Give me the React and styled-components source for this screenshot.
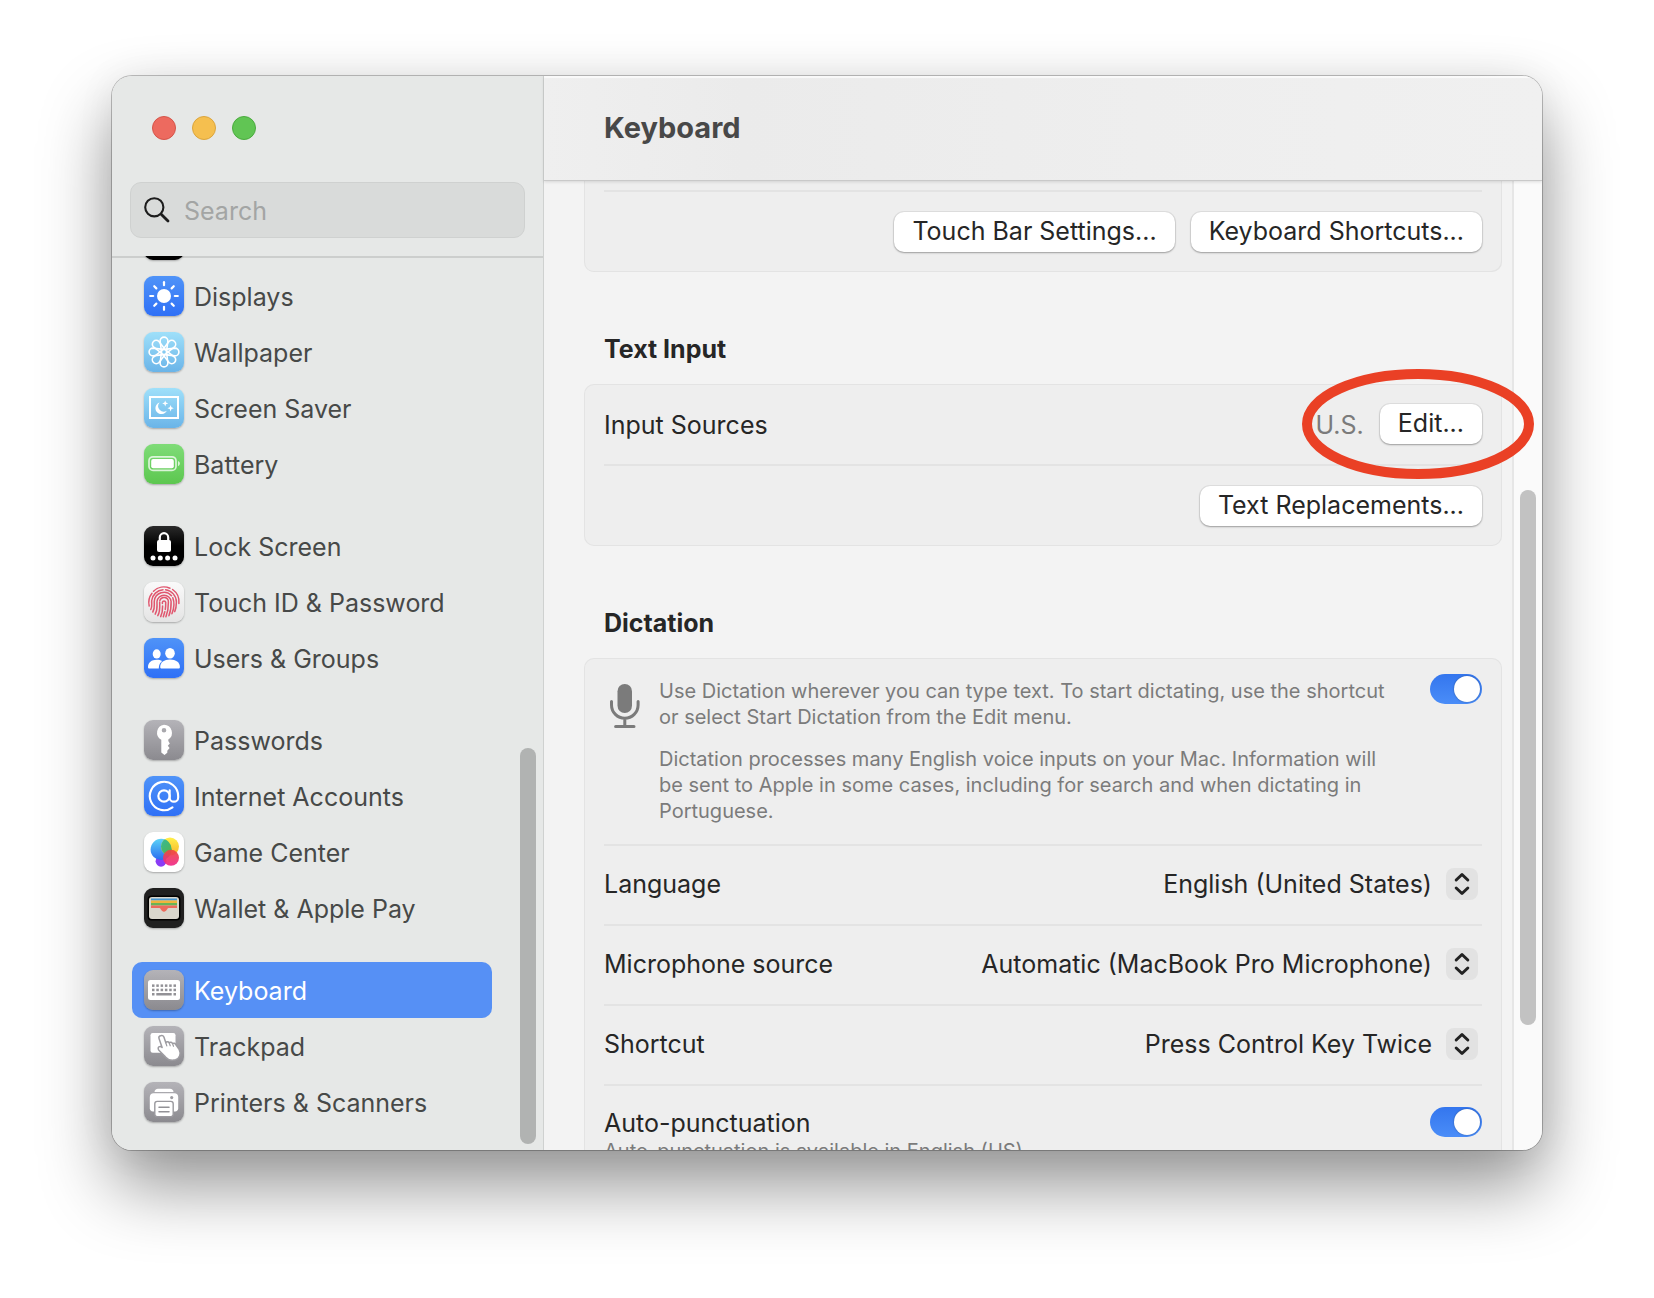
import React from "react";
import styled, { createGlobalStyle, css } from "styled-components";
import { AtSign } from "lucide-react";

const GlobalStyle = createGlobalStyle`
  *, *::before, *::after { box-sizing: border-box; }
  body {
    margin: 0;
    background: #ffffff;
    font-family: Inter, "Liberation Sans", sans-serif;
    font-size: 25px;
    line-height: 32px;
    color: #262626;
  }
  button, input, select { font: inherit; color: inherit; margin: 0; }
  h1, h2, p, ul { margin: 0; padding: 0; }
`;

/* ---------- window frame ---------- */

const Desktop = styled.div`
  display: flex;
  height: 100vh;
  padding: 76px 112px 148px;
  overflow: hidden;
`;

const Window = styled.main`
  flex: 1;
  display: grid;
  grid-template-columns: 432px minmax(0, 1fr);
  min-height: 0;
  border-radius: 20px;
  overflow: hidden;
  background: #f3f3f3;
  box-shadow: 0 0 0 1px rgba(0, 0, 0, 0.24), 0 36px 70px rgba(0, 0, 0, 0.42), 0 0 40px rgba(0, 0, 0, 0.06);
`;

/* ---------- sidebar ---------- */

const Sidebar = styled.aside`
  display: flex;
  flex-direction: column;
  min-height: 0;
  background: #e6e8e7;
  border-right: 1px solid #cfd1d0;
`;

const TrafficLights = styled.div`
  display: flex;
  gap: 16px;
  padding: 40px 40px 42px;
`;

const Light = styled.button`
  width: 24px;
  height: 24px;
  padding: 0;
  border-radius: 50%;
  border: 1px solid ${(p) => p.$edge};
  background: ${(p) => p.$fill};
`;

const SearchField = styled.label`
  display: flex;
  align-items: center;
  gap: 14px;
  height: 56px;
  margin: 0 18px;
  padding: 0 13px;
  border: 1px solid #cfd1d0;
  border-radius: 11px;
  background: #d9dbda;
`;

const SearchInput = styled.input`
  flex: 1;
  min-width: 0;
  padding: 2px 0 0;
  border: 0;
  outline: 0;
  background: transparent;
  &::placeholder { color: #a3a5a4; opacity: 1; }
`;

const ListArea = styled.nav`
  flex: 1;
  min-height: 0;
  display: grid;
  grid-template-columns: minmax(0, 1fr) 16px;
  grid-template-rows: minmax(0, 1fr);
  column-gap: 28px;
  margin-top: 18px;
  padding: 0 7px 0 20px;
  background: linear-gradient(#cccecd, #cccecd) top / 100% 2px no-repeat;
  overflow: hidden;
`;

const Groups = styled.div`
  display: flex;
  flex-direction: column;
  justify-content: flex-end;
  gap: 26px;
  min-height: 0;
  padding-bottom: 20px;
  overflow: hidden;
`;

const Group = styled.ul`
  flex: none;
  list-style: none;
`;

const NavLink = styled.a`
  display: flex;
  align-items: center;
  gap: 10px;
  height: 56px;
  padding: 0 12px;
  border-radius: 10px;
  color: #474948;
  text-decoration: none;
  white-space: nowrap;
  ${(p) =>
    p.$active &&
    css`
      background: #5690f5;
      color: #ffffff;
    `}
`;

const Caption = styled.span`
  padding-top: 2px;
`;

const Tile = styled.span`
  flex: none;
  display: flex;
  align-items: center;
  justify-content: center;
  width: 40px;
  height: 40px;
  border-radius: 9px;
  background: ${(p) => p.$bg};
  color: #ffffff;
  box-shadow: 0 1px 2px rgba(0, 0, 0, 0.28);
`;

const ThumbTrack = styled.div`
  display: grid;
  grid-template-rows: ${(p) => p.$rows};
`;

const Thumb = styled.span`
  grid-row: 2;
  width: 16px;
  border-radius: 8px;
  background: ${(p) => p.$color};
`;

/* ---------- content ---------- */

const Content = styled.section`
  display: flex;
  flex-direction: column;
  min-width: 0;
  min-height: 0;
`;

const Header = styled.header`
  position: relative;
  z-index: 1;
  flex: none;
  display: flex;
  align-items: center;
  height: 105px;
  padding: 0 60px;
  border-bottom: 1px solid #c9c9c9;
  background: linear-gradient(90deg, #efefef, #ebebeb 20%, #eeeeee 60%, #f0f0f0);
  box-shadow: 0 1px 3px rgba(0, 0, 0, 0.12), inset 0 2px 1px rgba(255, 255, 255, 0.7);
`;

const Title = styled.h1`
  font-size: 29px;
  line-height: 36px;
  font-weight: 700;
  color: #484848;
`;

const Scroller = styled.div`
  flex: 1;
  min-height: 0;
  display: grid;
  grid-template-columns: minmax(0, 1fr) 30px;
  grid-template-rows: minmax(0, 1fr);
  overflow: hidden;
`;

const Pane = styled.div`
  padding: 0 10px 0 40px;
`;

const Track = styled(ThumbTrack)`
  padding-left: 6px;
  border-left: 2px solid #e6e6e6;
  background: #fafafa;
`;

const SectionTitle = styled.h2`
  padding: 60px 20px 18px;
  font-size: 25px;
  line-height: 34px;
  font-weight: 700;
`;

const Card = styled.div`
  padding: 0 20px;
  border-radius: 10px;
  background: #eeeeee;
  box-shadow: inset 0 0 0 1px #e3e3e3;
  ${(p) =>
    p.$continued &&
    css`
      padding-top: 9px;
      border-radius: 0 0 10px 10px;
      box-shadow: inset 1px 0 #e3e3e3, inset -1px -1px #e3e3e3;
    `}
`;

const Row = styled.div`
  display: flex;
  align-items: center;
  justify-content: ${(p) => (p.$end ? "flex-end" : "space-between")};
  gap: 16px;
  min-height: ${(p) => (p.$tall ? 80 : 78)}px;
  padding-bottom: ${(p) => (p.$tall ? 0 : 2)}px;
`;

const Divider = styled.hr`
  height: 2px;
  margin: 0;
  border: 0;
  background: #e3e3e3;
`;

const PushButton = styled.button`
  height: 40px;
  padding: 0 18px 2px;
  border: 0;
  border-radius: 10px;
  background: #ffffff;
  box-shadow: 0 0 0 1px rgba(0, 0, 0, 0.06), 0 1px 2px rgba(0, 0, 0, 0.3);
  white-space: nowrap;
`;

const Value = styled.div`
  position: relative;
  display: flex;
  align-items: center;
  gap: 16px;
  color: #7b7b7b;
  ${PushButton} { color: #262626; }
`;

const Marker = styled.svg`
  position: absolute;
  top: 50%;
  right: -52px;
  z-index: 2;
  transform: translateY(-50%);
  pointer-events: none;
`;

const DictationRow = styled.div`
  display: flex;
  align-items: flex-start;
  padding: 16px 0 20px;
`;

const MicIcon = styled.svg`
  flex: none;
  margin: 10px 11px 0 0;
`;

const Notes = styled.div`
  flex: 1;
  display: grid;
  gap: 16px;
  padding: 4px 32px 0 0;
  font-size: 20px;
  line-height: 26px;
  color: #7b7b7b;
`;

const Toggle = styled.input`
  appearance: none;
  flex: none;
  display: flex;
  justify-content: flex-end;
  width: 52px;
  height: 30px;
  padding: 2px;
  border-radius: 15px;
  background: linear-gradient(#3476ee, #4a8df8);
  &::before {
    content: "";
    width: 26px;
    height: 26px;
    border-radius: 50%;
    background: #ffffff;
    box-shadow: 0 0 2px rgba(0, 0, 0, 0.35);
  }
  &:not(:checked) {
    justify-content: flex-start;
    background: #d5d5d5;
  }
`;

const PopUp = styled.div`
  display: flex;
  align-items: center;
  gap: 14px;
  padding-right: 4px;
`;

const PopUpSelect = styled.select`
  appearance: none;
  padding: 0;
  border: 0;
  outline: 0;
  background: transparent;
  text-align-last: right;
`;

const Stepper = styled.span`
  display: flex;
  align-items: center;
  justify-content: center;
  width: 32px;
  height: 32px;
  border-radius: 8px;
  background: #e2e2e2;
`;

const AutoRow = styled.div`
  display: flex;
  align-items: flex-start;
  justify-content: space-between;
  padding: 21px 0;
`;

const Hint = styled.p`
  font-size: 20px;
  line-height: 24px;
  color: #7b7b7b;
`;

/* ---------- icons ---------- */

const BLUE = "linear-gradient(#4f93f8, #2f70f6)";
const SKY = "linear-gradient(#9fe0fa, #6ab4e8)";
const GREY = "linear-gradient(#b4b3b8, #8b8a8f)";
const BLACK = "linear-gradient(#2a2a2a, #000000 50%)";

const Glyph = ({ children, ...rest }) => (
  <svg width="40" height="40" viewBox="0 0 40 40" fill="none" aria-hidden="true" {...rest}>
    {children}
  </svg>
);

const turns = [0, 45, 90, 135, 180, 225, 270, 315];

const SunGlyph = () => (
  <Glyph>
    <circle cx="20" cy="20" r="7" fill="#fff" />
    {turns.map((a) => (
      <path key={a} d="M20 9.2V6.2" stroke="#fff" strokeWidth="2.2" strokeLinecap="round" transform={`rotate(${a} 20 20)`} />
    ))}
  </Glyph>
);

const FlowerGlyph = () => (
  <Glyph>
    <g stroke="#fff" strokeWidth="1.6" strokeLinejoin="round">
      {turns.map((a) => (
        <path key={a} d="M17.400 19 16.100 9A3.900 3.900 0 1 1 23.900 9L22.600 19" transform={`rotate(${a} 20 20)`} />
      ))}
      <circle cx="20" cy="20" r="2.600" />
    </g>
  </Glyph>
);

const ScreenSaverGlyph = () => (
  <Glyph>
    <rect x="6" y="9" width="28" height="21" stroke="#fff" strokeWidth="2" />
    <path d="M15.6 14.4a6 6 0 1 0 7.2 8.4 5.6 5.6 0 0 1-7.2-8.4Z" fill="#fff" />
    <path d="m21.2 12.4.8 2.2 2.2.8-2.2.8-.8 2.2-.8-2.2-2.2-.8 2.2-.8ZM26.6 17l.9 2.3 2.3.9-2.3.9-.9 2.3-.9-2.3-2.3-.9 2.3-.9Z" fill="#fff" />
  </Glyph>
);

const BatteryGlyph = () => (
  <Glyph>
    <rect x="5" y="12.8" width="27" height="13.6" rx="4" stroke="#fff" strokeOpacity=".75" strokeWidth="1.7" />
    <rect x="7.2" y="15" width="22.6" height="9.2" rx="2" fill="#fff" />
    <path d="M34 17v5.2c1.1-.4 1.9-1.4 1.9-2.6S35.100 17.400 34 17Z" fill="#fff" fillOpacity=".75" />
  </Glyph>
);

const LockGlyph = () => (
  <Glyph>
    <path d="M15.800 15v-3.600a4.200 4.200 0 0 1 8.400 0V15" stroke="#fff" strokeWidth="2.200" />
    <rect x="13" y="14" width="14" height="12" rx="2" fill="#fff" />
    {[9, 16.3, 23.600, 31].map((x) => (
      <circle key={x} cx={x} cy="32" r="2.500" fill="#fff" />
    ))}
  </Glyph>
);

const FingerprintGlyph = () => (
  <Glyph>
    <g stroke="#e0566e" strokeWidth="1.500" strokeLinecap="round">
      <path d="M9.500 9.200A15 15 0 0 1 26 6.300" />
      <path d="M28.600 7.500A15 15 0 0 1 34.900 21.500" />
      <path d="M5.200 24A15 15 0 0 1 8 11.300" />
      <path d="M6.800 27.500C8.500 24.500 7.400 22 7.700 18.500A12.400 12.400 0 0 1 19 7.700" />
      <path d="M21.600 7.800A12.400 12.400 0 0 1 32.400 20c0 4-.6 7.200-1.700 9.600" />
      <path d="M8.800 30c2.400-4 1.300-7.200 1.500-10.800A9.800 9.800 0 0 1 27.500 13.800" />
      <path d="M28.800 15.800c1.800 4.800 1.100 11.200-.9 16" />
      <path d="M11.200 32.100c2.800-4.600 1.600-8.600 1.800-12.600a7.100 7.100 0 0 1 14.100 0c.2 5-.4 9.800-2.200 14.200" />
      <path d="M13.800 33.700c2.700-4.700 1.800-9.700 1.900-13.700" />
      <path d="M15.800 18.600a4.400 4.400 0 0 1 8.600 1.400c.1 5.100-.6 10-2.500 14.800" />
      <path d="M16.700 34.600c1.700-3.700 2-6.600 1.900-10.600" />
      <path d="M18.400 21.500v-1.300a1.700 1.700 0 0 1 3.300 0c.1 2.600 0 4.800-.4 7.200M20.800 29.800l-1.500 5" />
    </g>
  </Glyph>
);

const UsersGlyph = () => (
  <Glyph>
    <g fill="#fff">
      <ellipse cx="12.700" cy="15.900" rx="4" ry="4.600" />
      <path d="M4 29c0-4.500 3.600-7.300 8.700-7.300 2.200 0 4 .5 5.400 1.400-2 1.700-3.300 4-3.300 7.400H5.400C4.500 30.500 4 30 4 29Z" />
      <ellipse cx="26" cy="15.200" rx="4.800" ry="5.300" />
      <path d="M16.200 29c0-4.600 3.900-7.500 9.800-7.500s9.900 2.900 9.900 7.500c0 1-.6 1.500-1.500 1.500H17.700c-.9 0-1.500-.5-1.500-1.500Z" />
    </g>
  </Glyph>
);

const KeyGlyph = () => (
  <Glyph>
    <path
      fill="#fff"
      fillRule="evenodd"
      d="M20 4.800a8 8 0 0 1 4.300 14.700V21l1.500 2.400-2 2.300 1.800 2.400-2.300 2.600v2L20.500 35l-3.200-2.500V19.800A8 8 0 0 1 20 4.800Zm0 3.100a2.300 2.300 0 1 0 0 4.600 2.300 2.300 0 0 0 0-4.600Z"
    />
  </Glyph>
);

const GameGlyph = () => (
  <Glyph>
    <defs>
      <linearGradient id="gcBlue" x1="0" y1="0" x2="0" y2="1"><stop stopColor="#5cd3f7" /><stop offset="1" stopColor="#2a6df0" /></linearGradient>
      <linearGradient id="gcYellow" x1="0" y1="0" x2="0" y2="1"><stop stopColor="#fff04a" /><stop offset="1" stopColor="#f7b32b" /></linearGradient>
      <linearGradient id="gcGreen" x1="0" y1="0" x2="1" y2="1"><stop stopColor="#35b8a0" /><stop offset="1" stopColor="#5bb52e" /></linearGradient>
      <linearGradient id="gcRed" x1="0" y1="0" x2="0" y2="1"><stop stopColor="#ee4a3c" /><stop offset="1" stopColor="#f0288a" /></linearGradient>
      <clipPath id="gcClip"><circle cx="17.200" cy="17.400" r="10.600" /></clipPath>
    </defs>
    <circle cx="17" cy="29.300" r="5.400" fill="#8a3cf5" />
    <circle cx="17.200" cy="17.400" r="10.600" fill="url(#gcBlue)" />
    <circle cx="26" cy="14.600" r="9" fill="url(#gcYellow)" />
    <circle cx="26" cy="14.600" r="9" fill="url(#gcGreen)" clipPath="url(#gcClip)" />
    <circle cx="27" cy="25.800" r="8" fill="url(#gcRed)" fillOpacity=".92" />
  </Glyph>
);

const WalletGlyph = () => (
  <Glyph>
    <rect x="3.500" y="7.500" width="33" height="25" rx="4" fill="#000" />
    <rect x="5" y="9" width="30" height="22" rx="3" fill="#d9d6cc" />
    <path d="M7 10.500h26v2H7Z" fill="#4596d1" />
    <path d="M7 12.500h26V15H7Z" fill="#f0b43c" />
    <path d="M7 15h26v2.500H7Z" fill="#68b456" />
    <path d="M7 17.500h26v2.600h-8.500c-1.400 0-1.600 3.600-4.500 3.600s-3.100-3.600-4.500-3.600H7Z" fill="#ec6a5c" />
  </Glyph>
);

const KeyboardGlyph = () => (
  <Glyph>
    <rect x="4" y="10" width="32" height="20" rx="2.500" fill="#fff" />
    <g fill="#929196">
      {[8, 12.300, 16.600, 20.900, 25.200, 29.500].map((x) => (
        <React.Fragment key={x}>
          <rect x={x} y="14.400" width="2.500" height="2.500" />
          <rect x={x} y="18.700" width="2.500" height="2.500" />
        </React.Fragment>
      ))}
      <rect x="8" y="23" width="2.500" height="2.500" />
      <rect x="12.300" y="23" width="15.400" height="2.500" />
      <rect x="29.500" y="23" width="2.500" height="2.500" />
    </g>
  </Glyph>
);

const TrackpadGlyph = () => (
  <Glyph>
    <rect x="6.500" y="7" width="25" height="19.800" rx="2.200" fill="#fff" />
    <path
      d="M16.300 9.800c1.600-.9 3.200 0 3.700 1.500l1.800 5.400c.8-1.200 2.700-1.200 3.400.1 1-.9 2.700-.6 3.300.7 1.200-.8 2.800-.2 3.400 1.200l3.200 4.600c2.200 4.600.6 9.200-3.600 10.500-4.200 1.100-7.500.1-10.100-2.900l-6.500-6.600c-1-1.300-.9-2.800 0-3.400 1-.6 2.300-.3 3.200.6l-3-8.700c-.5-1.200-.2-2.400 1.200-3Z"
      fill="#fff"
      stroke="#9d9ca1"
      strokeWidth="1.500"
      strokeLinejoin="round"
    />
    <path d="M21.800 16.700l1 3.200M25.200 16.800l1 3M28.500 17.500l1 2.800" stroke="#9d9ca1" strokeWidth="1.200" strokeLinecap="round" />
  </Glyph>
);

const PrinterGlyph = () => (
  <Glyph>
    <path d="M10.500 10c0-2 1.500-3.300 3.500-3.300h12c2 0 3.500 1.300 3.500 3.300Z" fill="#fff" />
    <path d="M9.500 11.200h21c2.200 0 3.700 1.500 3.700 3.700v11.400c0 2-1.200 3.200-3.200 3.200H9c-2 0-3.200-1.200-3.200-3.200V14.900c0-2.200 1.500-3.700 3.700-3.700Z" fill="#fff" />
    <circle cx="27.700" cy="15.600" r="1.600" fill="#9d9ca1" />
    <rect x="10.800" y="19.400" width="18.400" height="15.200" rx="2.400" fill="#fff" stroke="#9a999e" strokeWidth="1.400" />
    <path d="M15 25.200h10M15 29.800h10" stroke="#929196" strokeWidth="1.500" strokeLinecap="round" />
  </Glyph>
);

const groups = [
  [
    { icon: null, bg: "#000000" },
    { label: "Displays", icon: <SunGlyph />, bg: BLUE },
    { label: "Wallpaper", icon: <FlowerGlyph />, bg: SKY },
    { label: "Screen Saver", icon: <ScreenSaverGlyph />, bg: SKY },
    { label: "Battery", icon: <BatteryGlyph />, bg: "linear-gradient(#7fdc78, #5cc74f)" },
  ],
  [
    { label: "Lock Screen", icon: <LockGlyph />, bg: BLACK },
    { label: "Touch ID & Password", icon: <FingerprintGlyph />, bg: "linear-gradient(#fafafa, #e4e4e4)" },
    { label: "Users & Groups", icon: <UsersGlyph />, bg: BLUE },
  ],
  [
    { label: "Passwords", icon: <KeyGlyph />, bg: GREY },
    { label: "Internet Accounts", icon: <AtSign size={34} strokeWidth={1.5} aria-hidden="true" />, bg: BLUE },
    { label: "Game Center", icon: <GameGlyph />, bg: "#ffffff" },
    { label: "Wallet & Apple Pay", icon: <WalletGlyph />, bg: "#202020" },
  ],
  [
    { label: "Keyboard", icon: <KeyboardGlyph />, bg: GREY, active: true },
    { label: "Trackpad", icon: <TrackpadGlyph />, bg: GREY },
    { label: "Printers & Scanners", icon: <PrinterGlyph />, bg: GREY },
  ],
];

const popUps = [
  { id: "language", label: "Language", value: "English (United States)" },
  { id: "microphone", label: "Microphone source", value: "Automatic (MacBook Pro Microphone)" },
  { id: "shortcut", label: "Shortcut", value: "Press Control Key Twice" },
];

function PopUpRow({ id, label, value }) {
  return (
    <Row>
      <label htmlFor={id}>{label}</label>
      <PopUp>
        <PopUpSelect id={id} defaultValue={value}>
          <option>{value}</option>
        </PopUpSelect>
        <Stepper>
          <svg width="16" height="24" viewBox="0 0 16 24" fill="none" aria-hidden="true">
            <path d="M2.200 8 8 2.500 13.800 8M2.200 16 8 21.500 13.800 16" stroke="#222" strokeWidth="3" strokeLinecap="round" strokeLinejoin="round" />
          </svg>
        </Stepper>
      </PopUp>
    </Row>
  );
}

export default function App() {
  return (
    <Desktop>
      <GlobalStyle />
      <Window>
        <Sidebar>
          <TrafficLights>
            <Light aria-label="Close" $fill="#ed6a5f" $edge="#d5554a" />
            <Light aria-label="Minimize" $fill="#f5bf4f" $edge="#dba53d" />
            <Light aria-label="Zoom" $fill="#61c554" $edge="#4bab3f" />
          </TrafficLights>
          <SearchField>
            <svg width="26" height="26" viewBox="0 0 26 26" fill="none" stroke="#1d1d1d" strokeLinecap="round" aria-hidden="true">
              <circle cx="10.300" cy="10.300" r="9.100" strokeWidth="2.100" />
              <path d="m17.200 17.200 6.800 6.800" strokeWidth="2.800" />
            </svg>
            <SearchInput type="text" placeholder="Search" aria-label="Search" />
          </SearchField>
          <ListArea>
            <Groups>
              {groups.map((items, g) => (
                <Group key={g}>
                  {items.map((item, i) => (
                    <li key={i}>
                      <NavLink href="#" $active={item.active}>
                        <Tile $bg={item.bg}>{item.icon}</Tile>
                        <Caption>{item.label}</Caption>
                      </NavLink>
                    </li>
                  ))}
                </Group>
              ))}
            </Groups>
            <ThumbTrack $rows="492fr 396fr 6fr">
              <Thumb $color="#b1b3b2" />
            </ThumbTrack>
          </ListArea>
        </Sidebar>

        <Content>
          <Header>
            <Title>Keyboard</Title>
          </Header>
          <Scroller>
            <Pane>
              <Card $continued>
                <Divider />
                <Row $end $tall>
                  <PushButton>Touch Bar Settings...</PushButton>
                  <PushButton>Keyboard Shortcuts...</PushButton>
                </Row>
              </Card>

              <SectionTitle>Text Input</SectionTitle>
              <Card>
                <Row $tall>
                  <Caption>Input Sources</Caption>
                  <Value>
                    <Caption>U.S.</Caption>
                    <PushButton>Edit...</PushButton>
                    <Marker width="232" height="110" viewBox="0 0 232 110" fill="none" aria-hidden="true">
                      <ellipse cx="116" cy="55" rx="111" ry="50" stroke="#ea4025" strokeWidth="10" />
                    </Marker>
                  </Value>
                </Row>
                <Divider />
                <Row $end $tall>
                  <PushButton>Text Replacements...</PushButton>
                </Row>
              </Card>

              <SectionTitle>Dictation</SectionTitle>
              <Card>
                <DictationRow>
                  <MicIcon width="44" height="44" viewBox="0 0 44 44" fill="none" aria-hidden="true">
                    <rect x="13.500" y="0" width="14.500" height="29" rx="7.200" fill="#7b7b7b" />
                    <path d="M7.500 17.500V21a13.300 13.300 0 0 0 26.600 0v-3.500M20.800 35v7M11.600 42.400h18.400" stroke="#7b7b7b" strokeWidth="3" strokeLinecap="round" />
                  </MicIcon>
                  <Notes>
                    <p>
                      Use Dictation wherever you can type text. To start dictating, use the shortcut or select Start
                      Dictation from the Edit menu.
                    </p>
                    <p>
                      Dictation processes many English voice inputs on your Mac. Information will be sent to Apple in
                      some cases, including for search and when dictating in Portuguese.
                    </p>
                  </Notes>
                  <Toggle type="checkbox" role="switch" defaultChecked aria-label="Dictation" />
                </DictationRow>
                {popUps.map((row) => (
                  <React.Fragment key={row.id}>
                    <Divider />
                    <PopUpRow {...row} />
                  </React.Fragment>
                ))}
                <Divider />
                <AutoRow>
                  <div>
                    <label htmlFor="auto-punctuation">Auto-punctuation</label>
                    <Hint>Auto-punctuation is available in English (US)</Hint>
                  </div>
                  <Toggle id="auto-punctuation" type="checkbox" role="switch" defaultChecked />
                </AutoRow>
              </Card>
            </Pane>
            <Track $rows="309fr 535fr 125fr">
              <Thumb $color="#c2c2c2" />
            </Track>
          </Scroller>
        </Content>
      </Window>
    </Desktop>
  );
}
